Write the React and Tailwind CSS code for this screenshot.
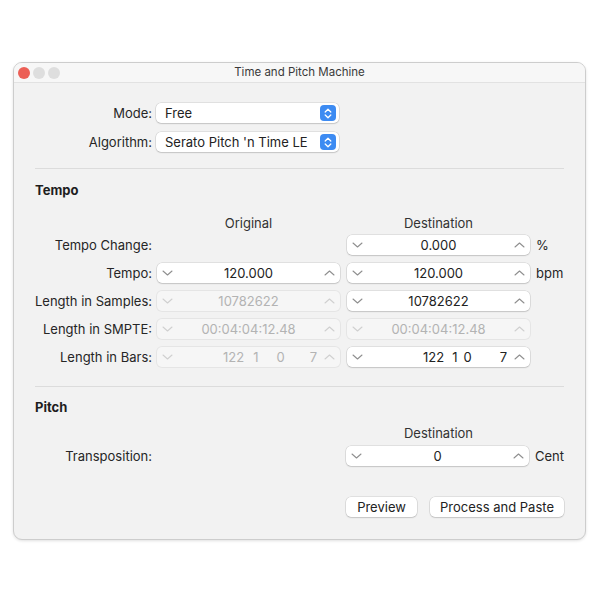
import React from "react";

function ChevronDown({ color }) {
  return (
    <svg width="11" height="6" viewBox="0 0 11 6" className="shrink-0">
      <path d="M1 1 L5.5 5 L10 1" fill="none" stroke={color} strokeWidth="1.1" strokeLinecap="round" strokeLinejoin="round" />
    </svg>
  );
}

function ChevronUp({ color }) {
  return (
    <svg width="11" height="6" viewBox="0 0 11 6" className="shrink-0">
      <path d="M1 5 L5.5 1 L10 5" fill="none" stroke={color} strokeWidth="1.1" strokeLinecap="round" strokeLinejoin="round" />
    </svg>
  );
}

function Stepper({ value, disabled, children }) {
  const chevron = disabled ? "#d0d0d0" : "#8f8f8f";
  return (
    <div
      className={
        "flex h-[20px] w-[183px] items-center rounded-[5px] px-[5px] " +
        (disabled
          ? "bg-[#f6f6f6] text-[#b3b3b3] shadow-[0_0_0_1px_rgba(0,0,0,0.05)]"
          : "bg-white text-[#222] shadow-[0_0_0_0.5px_rgba(0,0,0,0.15),0_1px_1.5px_rgba(0,0,0,0.12)]")
      }
    >
      <ChevronDown color={chevron} />
      <div className="flex flex-1 items-center justify-center leading-none">{children ?? value}</div>
      <ChevronUp color={chevron} />
    </div>
  );
}

function Popup({ value }) {
  return (
    <div className="flex h-[20px] w-[183px] items-center justify-between rounded-[5px] bg-white pl-[9px] pr-[3px] text-[#222] shadow-[0_0_0_0.5px_rgba(0,0,0,0.15),0_1px_1.5px_rgba(0,0,0,0.12)]">
      <span className="leading-none">{value}</span>
      <div className="flex h-[16px] w-[16px] items-center justify-center rounded-[4px] bg-[#3d8bf2]">
        <svg width="8" height="11" viewBox="0 0 8 11">
          <path d="M1.2 4 L4 1.3 L6.8 4 M1.2 7 L4 9.7 L6.8 7" fill="none" stroke="white" strokeWidth="1.3" strokeLinecap="round" strokeLinejoin="round" />
        </svg>
      </div>
    </div>
  );
}

function Label({ children }) {
  return <div className="w-[117px] shrink-0 text-right leading-none text-[#262626]">{children}</div>;
}

function Unit({ children }) {
  return <div className="ml-[6px] leading-none text-[#262626]">{children}</div>;
}

function BarsValue({ offsets }) {
  return (
    <div className="flex w-full items-center leading-none">
      <span style={{ marginLeft: offsets[0] }}>122</span>
      <span style={{ marginLeft: offsets[1] }}>1</span>
      <span style={{ marginLeft: offsets[2] }}>0</span>
      <span className="ml-auto mr-[7px]">7</span>
    </div>
  );
}

function Row({ label, original, destination, unit }) {
  return (
    <div className="flex h-[20px] items-center">
      <Label>{label}</Label>
      <div className="ml-[5px] w-[183px]">{original}</div>
      <div className="ml-[7px] w-[183px]">{destination}</div>
      {unit && <Unit>{unit}</Unit>}
    </div>
  );
}

export default function App() {
  return (
    <div className="min-h-[600px] w-[600px] bg-white pt-[62px] font-['Inter','Noto_Sans',sans-serif] text-[13px]">
      <div className="ml-[13px] h-[478px] w-[573px] overflow-hidden rounded-[9px] border border-[#cdcdcd] bg-[#f2f2f2] shadow-[0_1px_3px_rgba(0,0,0,0.12)]">
        {/* title bar */}
        <div className="relative flex h-[20px] items-center justify-center border-b border-[#e2e2e2] bg-[#f7f7f7]">
          <div className="absolute left-[4px] top-[4px] flex gap-[3px]">
            <div className="h-[12px] w-[12px] rounded-full bg-[#ec5f56]" />
            <div className="h-[12px] w-[12px] rounded-full bg-[#dedede]" />
            <div className="h-[12px] w-[12px] rounded-full bg-[#dedede]" />
          </div>
          <span className="text-[11.5px] leading-none text-[#3a3a3a]">Time and Pitch Machine</span>
        </div>

        <div className="px-[21px] pt-[20px]">
          <div className="flex h-[20px] items-center">
            <Label>Mode:</Label>
            <div className="ml-[4px]">
              <Popup value="Free" />
            </div>
          </div>
          <div className="mt-[9px] flex h-[20px] items-center">
            <Label>Algorithm:</Label>
            <div className="ml-[4px]">
              <Popup value="Serato Pitch 'n Time LE" />
            </div>
          </div>

          <div className="mt-[16px] h-px bg-[#dcdcdc]" />

          <div className="mt-[13px] h-[16px] font-bold leading-[16px] text-[#1e1e1e]">Tempo</div>

          <div className="mt-[17px] flex h-[16px] items-center leading-none text-[#333]">
            <div className="w-[117px]" />
            <div className="ml-[5px] w-[183px] text-center">Original</div>
            <div className="ml-[7px] w-[183px] text-center">Destination</div>
          </div>

          <div className="mt-[4px] flex flex-col gap-[8px]">
            <Row label="Tempo Change:" original={null} destination={<Stepper value="0.000" />} unit="%" />
            <Row label="Tempo:" original={<Stepper value="120.000" />} destination={<Stepper value="120.000" />} unit="bpm" />
            <Row
              label="Length in Samples:"
              original={<Stepper disabled value="10782622" />}
              destination={<Stepper value="10782622" />}
            />
            <Row
              label="Length in SMPTE:"
              original={<Stepper disabled value="00:04:04:12.48" />}
              destination={<Stepper disabled value="00:04:04:12.48" />}
            />
            <Row
              label="Length in Bars:"
              original={
                <Stepper disabled>
                  <BarsValue offsets={[50, 9, 18]} />
                </Stepper>
              }
              destination={
                <Stepper>
                  <BarsValue offsets={[60, 8, 6]} />
                </Stepper>
              }
            />
          </div>

          <div className="mt-[19px] h-px bg-[#dcdcdc]" />

          <div className="mt-[12px] h-[16px] font-bold leading-[16px] text-[#1e1e1e]">Pitch</div>

          <div className="mt-[10px] flex h-[16px] items-center leading-none text-[#333]">
            <div className="w-[117px]" />
            <div className="ml-[5px] w-[183px]" />
            <div className="ml-[7px] w-[183px] text-center">Destination</div>
          </div>

          <div className="mt-[5px]">
            <Row label="Transposition:" original={null} destination={<Stepper value="0" />} unit="Cent" />
          </div>

          <div className="mt-[31px] flex justify-end gap-[13px]">
            <button className="flex h-[20px] w-[71px] items-center justify-center rounded-[5px] bg-white leading-none text-[#222] shadow-[0_0_0_0.5px_rgba(0,0,0,0.15),0_1px_1.5px_rgba(0,0,0,0.12)]">
              Preview
            </button>
            <button className="flex h-[20px] w-[134px] items-center justify-center rounded-[5px] bg-white leading-none text-[#222] shadow-[0_0_0_0.5px_rgba(0,0,0,0.15),0_1px_1.5px_rgba(0,0,0,0.12)]">
              Process and Paste
            </button>
          </div>
        </div>
      </div>
    </div>
  );
}
